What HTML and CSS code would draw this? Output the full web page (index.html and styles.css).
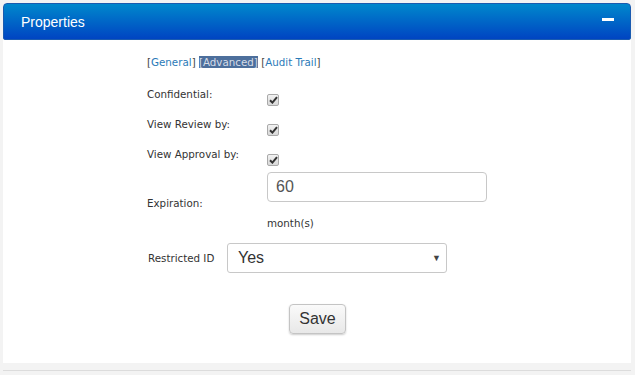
FILE: index.html
```html
<!DOCTYPE html>
<html lang="en">
    <head>
        <meta charset="utf-8">
        <title>Properties</title>
        <link rel="stylesheet" href="styles.css">
    </head>
    <body>
        <div class="panel">
            <div class="panel_head">
                <span class="panel_title">Properties</span>
                <span class="panel_min"></span>
            </div>
            <div class="panel_body">
                <div class="tabs">
                    <a class="tab">[<span>General</span>]</a>
                    <a class="tab tab_on">[<span>Advanced</span>]</a>
                    <a class="tab">[<span>Audit Trail</span>]</a>
                </div>

                <div class="form">
                    <div class="lbl">Confidential:</div>
                    <div class="val"><span class="chk"><svg width="9" height="8" viewBox="0 0 9 8"><path d="M1 4.2 L3.4 6.6 L8 1.2" stroke="#333" stroke-width="2" fill="none"/></svg></span></div>

                    <div class="lbl">View Review by:</div>
                    <div class="val"><span class="chk"><svg width="9" height="8" viewBox="0 0 9 8"><path d="M1 4.2 L3.4 6.6 L8 1.2" stroke="#333" stroke-width="2" fill="none"/></svg></span></div>

                    <div class="lbl">View Approval by:</div>
                    <div class="val"><span class="chk"><svg width="9" height="8" viewBox="0 0 9 8"><path d="M1 4.2 L3.4 6.6 L8 1.2" stroke="#333" stroke-width="2" fill="none"/></svg></span></div>

                    <div class="lbl lbl_mid">Expiration:</div>
                    <div class="val val_exp">
                        <div class="txt">60</div>
                        <div class="unit">month(s)</div>
                    </div>
                </div>

                <div class="row_sel">
                    <div class="lbl">Restricted ID</div>
                    <div class="sel">Yes<span class="arrow">&#9660;</span></div>
                </div>

                <div class="actions">
                    <button class="btn">Save</button>
                </div>
            </div>
        </div>
    </body>
</html>
```

FILE: styles.css
```css
body {
    margin: 0;
    background: #f3f3f3;
    font-family: "DejaVu Sans", Verdana, sans-serif;
    font-size: 10.3px;
    color: #333;
}

.panel {
    margin: 3px 4px 0 3px;
    height: 367px;
    border-bottom: 1px solid #dcdcdc;
}

.panel_head {
    height: 37px;
    box-sizing: border-box;
    display: flex;
    align-items: center;
    justify-content: space-between;
    padding: 0 16px 0 17px;
    border: 1px solid #1a5bb0;
    border-radius: 4px 4px 2px 2px;
    background: linear-gradient(#0088cc, #0044c2);
}

.panel_title {
    font-family: "Liberation Sans", Arial, sans-serif;
    font-size: 14px;
    color: #fff;
}

.panel_min {
    width: 12px;
    height: 3px;
    background: #fff;
    margin-top: -4px;
}

.panel_body {
    background: #fff;
    height: 323px;
    padding: 0 0 0 144px;
    box-sizing: border-box;
}

.tabs {
    padding-top: 15px;
    height: 14px;
    line-height: 14px;
    color: #444;
}

.tab {
    cursor: pointer;
}

.tab span {
    color: #2a7ab8;
}

.tab_on {
    background: #4d6f9c;
    color: #d6dde8;
}

.tab_on span {
    color: #d6dde8;
}

.form {
    display: grid;
    grid-template-columns: 120px 220px;
    grid-template-rows: 30px 30px 30px 60px;
    margin-top: 18px;
}

.lbl {
    line-height: 14px;
}

.lbl_mid {
    align-self: center;
    margin-top: -8px;
}

.val {
    padding-top: 7px;
}

.chk {
    display: inline-flex;
    align-items: center;
    justify-content: center;
    width: 10px;
    height: 10px;
    border: 1px solid #a9a9a9;
    border-radius: 2px;
    background: linear-gradient(#f2f2f2, #d8d8d8);
}

.val_exp {
    padding-top: 0;
    margin-top: -5px;
}

.txt {
    box-sizing: border-box;
    height: 30px;
    width: 220px;
    border: 1px solid #c8c8c8;
    border-radius: 4px;
    padding: 0 8px;
    line-height: 28px;
    font-family: "Liberation Sans", Arial, sans-serif;
    font-size: 16px;
    color: #555;
}

.unit {
    margin-top: 14px;
    line-height: 14px;
}

.row_sel {
    display: flex;
    align-items: center;
    margin-top: 6px;
}

.row_sel .lbl {
    width: 79px;
    padding-left: 1px;
}

.sel {
    position: relative;
    box-sizing: border-box;
    height: 30px;
    width: 220px;
    border: 1px solid #c8c8c8;
    border-radius: 3px;
    padding: 0 10px;
    line-height: 28px;
    font-family: "Liberation Sans", Arial, sans-serif;
    font-size: 16px;
    color: #333;
}

.arrow {
    position: absolute;
    right: 5px;
    top: 0;
    font-size: 9px;
    color: #444;
}

.actions {
    width: 341px;
    display: flex;
    justify-content: center;
    margin-top: 31px;
}

.btn {
    width: 57px;
    height: 30px;
    border: 1px solid #c4c4c4;
    border-radius: 4px;
    background: linear-gradient(#fafafa, #e8e8e8);
    box-shadow: 0 1px 2px rgba(0, 0, 0, 0.2);
    font-family: "Liberation Sans", Arial, sans-serif;
    font-size: 16px;
    color: #333;
    padding: 0;
}
```
